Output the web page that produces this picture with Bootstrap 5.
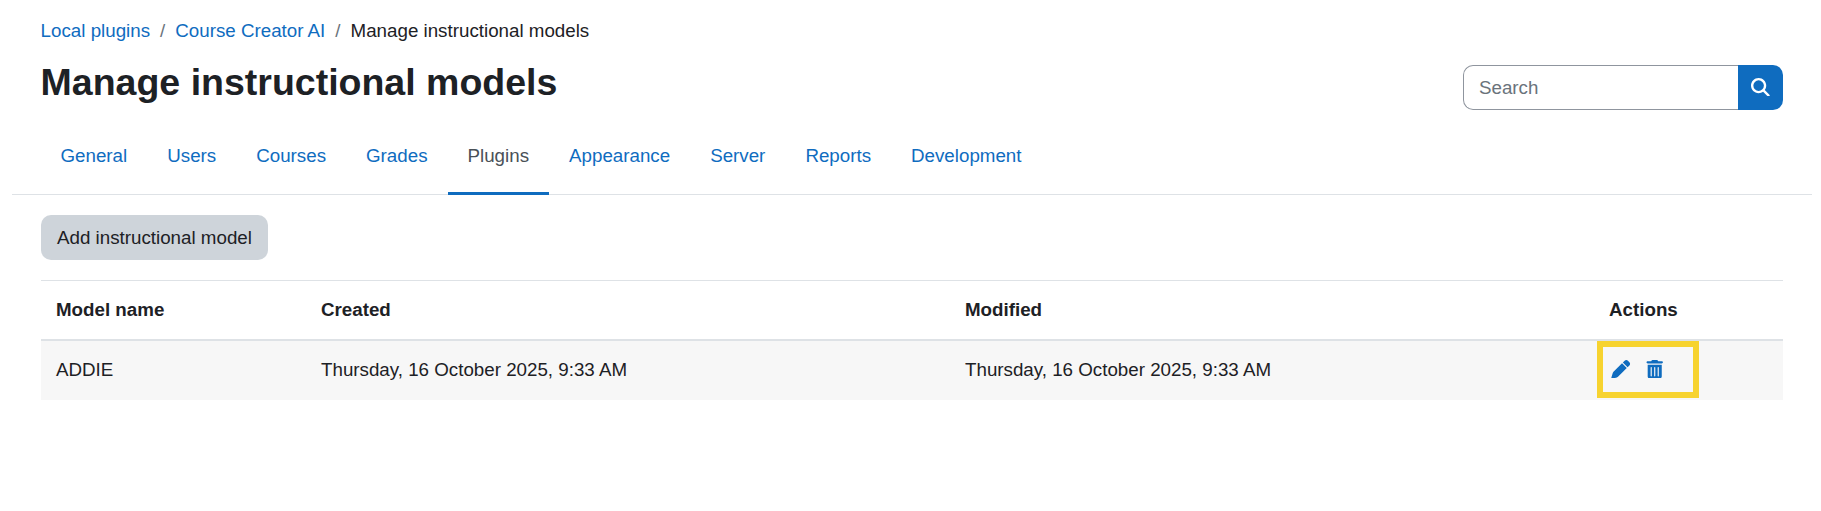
<!DOCTYPE html>
<html lang="en">
<head>
<meta charset="utf-8">
<meta name="viewport" content="width=device-width, initial-scale=1">
<title>Manage instructional models</title>
<link href="https://cdn.jsdelivr.net/npm/bootstrap@5.3.0/dist/css/bootstrap.min.css" rel="stylesheet">
<style>
html{font-size:20px}
body{font-family:"Liberation Sans",Arial,sans-serif;font-size:.9375rem;line-height:1.5;color:#1d2125;background:#fff}
a{color:#0f6cbf;text-decoration:none}
.page-head{padding:17px 38px 0 40.6px}
.breadcrumb{--bs-breadcrumb-item-padding-x:.5rem;--bs-breadcrumb-divider-color:#6a737b;font-size:.9375rem;line-height:28px}
.page-title{font-size:37.5px;font-weight:700;line-height:45px;margin:15px 0 5px;color:#1d2125}
.search-box{width:320px}
.search-box .form-control{height:45px;border:1px solid #8f959e;border-radius:10px 0 0 10px;font-size:.9375rem;padding:0 15px;border-right:0}
.search-box .form-control::placeholder{color:#6a737b}
.search-box .btn{width:45px;height:45px;background:#0f6cbf;border:0;border-radius:0 10px 10px 0;padding:0 0 1px}
.icon{width:18.75px;height:18.75px;display:block;fill:currentColor}
.admin-tabs{margin:9px 9px 0 12px;padding-left:28.5px;height:76px;border-bottom:1px solid #dee2e6}
.admin-tabs .nav-link{color:#0f6cbf;height:76px;padding:0 20px;line-height:73px;border-bottom:3px solid transparent;font-size:.9375rem}
.admin-tabs .nav-link.active{color:#495057;border-bottom-color:#0f6cbf}
.page-main{padding:20px 38px 0 41px}
.btn-add{background:#ced4da;color:#1d2125;font-size:.9375rem;height:45px;border:0;border-radius:10px;padding:1px 16px 0;line-height:28px}
.models{table-layout:fixed;margin-top:20px;border-collapse:separate;border-spacing:0;--bs-table-bg:transparent;color:#1d2125}
.models th,.models td{padding:15px;line-height:28px;color:#1d2125;border:0;box-shadow:none}
.models thead th{border-top:1px solid #dee2e6;border-bottom:2px solid #dee2e6;height:61px}
.models tbody td{background:#f7f7f7;height:59px}
.action-icons{height:28px;gap:10.5px;padding-bottom:2px}
.action-icons .icon{width:23.44px}
.highlight{left:3px;top:0;width:102px;height:57px;border:6px solid #f7d32f;pointer-events:none}
</style>
</head>
<body>
<header class="page-head d-flex justify-content-between">
  <div>
    <nav aria-label="Breadcrumb">
      <ol class="breadcrumb mb-0">
        <li class="breadcrumb-item"><a href="#">Local plugins</a></li>
        <li class="breadcrumb-item"><a href="#">Course Creator AI</a></li>
        <li class="breadcrumb-item">Manage instructional models</li>
      </ol>
    </nav>
    <h1 class="page-title">Manage instructional models</h1>
  </div>
  <form class="search-box input-group flex-nowrap align-self-end">
    <input type="text" class="form-control" placeholder="Search" aria-label="Search">
    <button type="button" class="btn text-white d-flex align-items-center justify-content-center" aria-label="Search">
      <svg class="icon" viewBox="0 0 512 512"><path d="M416 208c0 45.9-14.9 88.3-40 122.7L502.6 457.4c12.5 12.5 12.5 32.8 0 45.3s-32.8 12.5-45.3 0L330.7 376c-34.4 25.2-76.8 40-122.7 40C93.1 416 0 322.9 0 208S93.1 0 208 0S416 93.1 416 208zM208 352a144 144 0 1 0 0-288 144 144 0 1 0 0 288z"/></svg>
    </button>
  </form>
</header>
<ul class="nav admin-tabs">
  <li class="nav-item"><a class="nav-link" href="#">General</a></li>
  <li class="nav-item"><a class="nav-link" href="#">Users</a></li>
  <li class="nav-item"><a class="nav-link" href="#">Courses</a></li>
  <li class="nav-item"><a class="nav-link" href="#">Grades</a></li>
  <li class="nav-item"><a class="nav-link active" href="#">Plugins</a></li>
  <li class="nav-item"><a class="nav-link" href="#">Appearance</a></li>
  <li class="nav-item"><a class="nav-link" href="#">Server</a></li>
  <li class="nav-item"><a class="nav-link" href="#">Reports</a></li>
  <li class="nav-item"><a class="nav-link" href="#">Development</a></li>
</ul>
<main class="page-main">
  <button type="button" class="btn btn-add d-block">Add instructional model</button>
  <table class="table models mb-0">
    <colgroup><col style="width:265px"><col style="width:644px"><col style="width:644px"><col></colgroup>
    <thead><tr><th>Model name</th><th>Created</th><th>Modified</th><th>Actions</th></tr></thead>
    <tbody>
      <tr>
        <td>ADDIE</td>
        <td>Thursday, 16 October 2025, 9:33 AM</td>
        <td>Thursday, 16 October 2025, 9:33 AM</td>
        <td class="position-relative">
          <div class="d-flex align-items-center action-icons">
            <a href="#" aria-label="Edit"><svg class="icon" viewBox="0 0 512 512"><path d="M362.7 19.3L314.3 67.7 444.3 197.7l48.4-48.4c25-25 25-65.5 0-90.5L453.3 19.3c-25-25-65.5-25-90.5 0zm-71 71L58.6 323.5c-10.4 10.4-18 23.3-22.2 37.4L1 481.2C-1.5 489.7 .8 498.8 7 505s15.3 8.5 23.7 6.1l120.3-35.4c14.1-4.2 27-11.8 37.4-22.2L421.7 220.3 291.7 90.3z"/></svg></a>
            <a href="#" aria-label="Delete"><svg class="icon" viewBox="0 0 448 512"><path d="M135.2 17.7C140.6 6.8 151.7 0 163.8 0H284.2c12.1 0 23.2 6.8 28.6 17.7L320 32h96c17.7 0 32 14.3 32 32s-14.3 32-32 32H32C14.3 96 0 81.7 0 64S14.3 32 32 32h96l7.2-14.3zM32 128H416V448c0 35.3-28.7 64-64 64H96c-35.3 0-64-28.7-64-64V128zm96 64c-8.8 0-16 7.2-16 16V432c0 8.8 7.2 16 16 16s16-7.2 16-16V208c0-8.8-7.2-16-16-16zm96 0c-8.8 0-16 7.2-16 16V432c0 8.8 7.2 16 16 16s16-7.2 16-16V208c0-8.8-7.2-16-16-16zm96 0c-8.8 0-16 7.2-16 16V432c0 8.8 7.2 16 16 16s16-7.2 16-16V208c0-8.8-7.2-16-16-16z"/></svg></a>
          </div>
          <span class="highlight position-absolute"></span>
        </td>
      </tr>
    </tbody>
  </table>
</main>
<script src="https://cdn.jsdelivr.net/npm/bootstrap@5.3.0/dist/js/bootstrap.bundle.min.js"></script>
</body>
</html>
